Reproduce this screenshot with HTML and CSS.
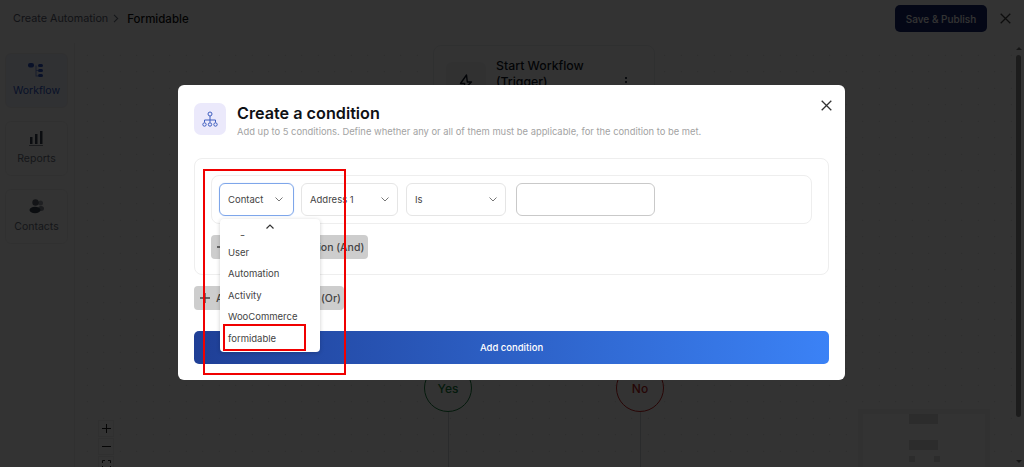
FILE: index.html
```html
<!DOCTYPE html>
<html lang="en">
<head>
    <link rel="stylesheet" href="styles.css">
</head>
<body>
    <div class="app">
        <header class="topbar">
            <div class="crumbs">
                <span class="crumb">Create Automation</span>
                <svg class="crumb-sep" width="6" height="9" viewBox="0 0 6 9"><path d="M1 .8l3.700 3.700L1 8.200" fill="none" stroke="currentColor" stroke-width="1.100"/></svg>
                <span class="crumb-current">Formidable</span>
            </div>
            <div class="topbar-actions">
                <button class="publish">Save &amp; Publish</button>
                <svg class="topbar-close" width="11" height="11" viewBox="0 0 11 11"><path d="M.7.7l9.600 9.600M10.300.7L.7 10.300" stroke="currentColor" stroke-width="1.300"/></svg>
            </div>
        </header>
        <div class="main">
            <aside class="sidebar">
                <div class="side-item active">
                    <svg width="17" height="17" viewBox="0 0 17 17" fill="currentColor"><rect x="0" y="1" width="6" height="4.500" rx="2"/><rect x="10" y="2" width="5" height="3" rx="1.500"/><rect x="10" y="7" width="5" height="3" rx="1.500"/><rect x="10" y="12" width="5" height="3" rx="1.500"/><path d="M7.500 3.500h1v10H10v1H7.500zM8.500 8H10v1H8.500z" opacity=".6"/></svg>
                    <span>Workflow</span>
                </div>
                <div class="side-item">
                    <svg width="17" height="17" viewBox="0 0 17 17" fill="currentColor"><rect x="2" y="7" width="2.500" height="7"/><rect x="7" y="4" width="2.500" height="10"/><rect x="12" y="1" width="2.500" height="13"/><rect x="1" y="15" width="14" height="1" opacity=".6"/></svg>
                    <span>Reports</span>
                </div>
                <div class="side-item">
                    <svg width="17" height="17" viewBox="0 0 17 17" fill="currentColor"><circle cx="7.500" cy="4.500" r="3.200" opacity=".8"/><circle cx="12.500" cy="5" r="2.500" opacity=".5"/><ellipse cx="7" cy="12" rx="5.500" ry="3.200"/><ellipse cx="13" cy="10.500" rx="3" ry="2.500" opacity=".6"/></svg>
                    <span>Contacts</span>
                </div>
            </aside>
            <section class="canvas">
                <div class="node">
                    <div class="node-icon">
                        <svg width="14" height="16" viewBox="0 0 14 16"><path d="M7.500 1L1.500 9.500h4.200L5 15l7.500-7H8.300z" fill="none" stroke="currentColor" stroke-width="1.400" stroke-linejoin="round"/></svg>
                    </div>
                    <div class="node-title">Start Workflow (Trigger)</div>
                    <div class="node-menu"><i></i><i></i><i></i></div>
                </div>
                <div class="branch branch-yes">Yes</div>
                <div class="branch branch-no">No</div>
                <div class="branch-line line-yes"></div>
                <div class="branch-line line-no"></div>
                <div class="zoom-tools">
                    <div class="zoom-btn"><svg width="9" height="9" viewBox="0 0 9 9"><path d="M4.500 0v9M0 4.500h9" stroke="currentColor"/></svg></div>
                    <div class="zoom-btn"><svg width="9" height="9" viewBox="0 0 9 9"><path d="M0 4.500h9" stroke="currentColor"/></svg></div>
                    <div class="zoom-btn"><svg width="9" height="9" viewBox="0 0 9 9"><path d="M.5 3V.5H3M6 .5h2.500V3M8.500 6v2.500H6M3 8.500H.5V6" fill="none" stroke="currentColor"/></svg></div>
                </div>
                <div class="minimap">
                    <div class="mini-a"></div>
                    <div class="mini-b"></div>
                    <div class="mini-row"><i></i><i></i></div>
                </div>
                <div class="scrollbar">
                    <div class="scroll-arrow"></div>
                    <div class="scroll-thumb"></div>
                    <div class="scroll-arrow scroll-arrow-down"></div>
                </div>
            </section>
        </div>
    </div>

    <div class="overlay"></div>

    <div class="modal">
        <svg class="modal-close" width="11" height="11" viewBox="0 0 11 11"><path d="M.7.7l9.600 9.600M10.300.7L.7 10.300" stroke="currentColor" stroke-width="1.300"/></svg>
        <div class="modal-head">
            <div class="modal-icon">
                <svg width="16" height="17" viewBox="0 0 16 17" fill="none" stroke="currentColor" stroke-width="1"><circle cx="8" cy="3" r="2"/><path d="M8 5v4M2.500 11.500V9h11v2.500M8 9v2.500"/><circle cx="2.500" cy="13.500" r="1.700"/><circle cx="8" cy="13.500" r="1.700"/><circle cx="13.500" cy="13.500" r="1.700"/></svg>
            </div>
            <div>
                <h2>Create a condition</h2>
                <p>Add up to 5 conditions. Define whether any or all of them must be applicable, for the condition to be met.</p>
            </div>
        </div>

        <div class="group">
            <div class="rule">
                <div class="select select-focus select-contact">Contact<svg width="8" height="5" viewBox="0 0 8 5"><path d="M.5.5L4 4 7.500.5" fill="none" stroke="currentColor"/></svg></div>
                <div class="select select-field">Address 1<svg width="8" height="5" viewBox="0 0 8 5"><path d="M.5.5L4 4 7.500.5" fill="none" stroke="currentColor"/></svg></div>
                <div class="select select-op">Is<svg width="8" height="5" viewBox="0 0 8 5"><path d="M.5.5L4 4 7.500.5" fill="none" stroke="currentColor"/></svg></div>
                <div class="value-input"></div>
            </div>
            <button class="add-btn add-and"><svg class="plus" width="10" height="10" viewBox="0 0 10 10"><path d="M5 0v10M0 5h10" stroke="currentColor" stroke-width="1.300"/></svg>Add a new condition (And)</button>
        </div>

        <button class="add-btn add-or"><svg class="plus" width="10" height="10" viewBox="0 0 10 10"><path d="M5 0v10M0 5h10" stroke="currentColor" stroke-width="1.300"/></svg>Add condition group (Or)</button>

        <button class="submit">Add condition</button>

        <div class="dropdown">
            <svg class="dropdown-up" width="8" height="5" viewBox="0 0 8 5"><path d="M.5 4.500L4 1l3.500 3.500" fill="none" stroke="currentColor" stroke-width="1.200"/></svg>
            <div class="dropdown-list">
                <div class="dropdown-item dropdown-cut">Segment</div>
                <div class="dropdown-item">User</div>
                <div class="dropdown-item">Automation</div>
                <div class="dropdown-item">Activity</div>
                <div class="dropdown-item">WooCommerce</div>
                <div class="dropdown-item">formidable</div>
            </div>
        </div>
    </div>

    <div class="mark mark-outer"></div>
    <div class="mark mark-inner"></div>
</body>
</html>
```

FILE: styles.css
```css
* {
    box-sizing: border-box;
}

body {
    margin: 0;
    width: 1024px;
    height: 467px;
    overflow: hidden;
    position: relative;
    font-family: Inter, "Liberation Sans", sans-serif;
    color: #111827;
    background: #fff;
}

.app {
    height: 467px;
    display: flex;
    flex-direction: column;
}

.topbar {
    height: 43px;
    padding: 5px 13px 0 13px;
    display: flex;
    justify-content: space-between;
    align-items: flex-start;
}

.crumbs {
    display: flex;
    align-items: center;
    height: 27px;
    font-size: 10.800px;
}

.crumb {
    color: #5b6270;
}

.crumb-sep {
    margin: 0 8px 0 5px;
    color: #6b7280;
}

.crumb-current {
    font-size: 11.500px;
    font-weight: 500;
    color: #111;
}

.topbar-actions {
    display: flex;
    align-items: center;
    gap: 13px;
}

.publish {
    width: 92px;
    height: 27px;
    border: 0;
    border-radius: 5px;
    background: #17266e;
    color: #fff;
    font: 500 10px Inter, sans-serif;
}

.topbar-close {
    color: #444;
}

.main {
    flex: 1;
    display: flex;
    min-height: 0;
}

.sidebar {
    width: 75px;
    padding: 10px 6px 0 5px;
    border-right: 1px solid #f0f0f0;
    display: flex;
    flex-direction: column;
    gap: 13px;
}

.side-item {
    height: 55px;
    padding-bottom: 2px;
    border: 1px solid #f1f1f1;
    border-radius: 6px;
    display: flex;
    flex-direction: column;
    align-items: center;
    justify-content: center;
    gap: 5px;
    font-size: 10.500px;
    color: #6b7280;
}

.side-item svg {
    color: #374151;
}

.side-item.active {
    background: #eef2ff;
    color: #2f55c9;
}

.side-item.active svg {
    color: #2f55c9;
}

.canvas {
    flex: 1;
    position: relative;
    background-image: radial-gradient(#cfcfcf 0.7px, transparent 0.8px);
    background-size: 16.500px 16.500px;
    background-position: 4px 4px;
}

.node {
    position: absolute;
    left: 358px;
    top: 2px;
    width: 222px;
    height: 90px;
    padding: 12px;
    background: #fff;
    border: 1px solid #eceef1;
    border-radius: 8px;
    display: flex;
    gap: 10px;
}

.node-icon {
    width: 40px;
    height: 40px;
    margin-top: 4px;
    border-radius: 6px;
    background: #f3f4f6;
    display: flex;
    align-items: center;
    justify-content: center;
    flex-shrink: 0;
}

.node-title {
    width: 100px;
    font-size: 12.300px;
    font-weight: 500;
    line-height: 16px;
}

.node-menu {
    position: absolute;
    right: 27px;
    top: 31px;
    display: flex;
    flex-direction: column;
    gap: 2px;
}

.node-menu i {
    width: 2px;
    height: 2px;
    background: #374151;
}

.branch {
    position: absolute;
    top: 321px;
    width: 48px;
    height: 48px;
    border-radius: 50%;
    background: #fff;
    border: 1px solid;
    display: flex;
    align-items: center;
    justify-content: center;
    font-size: 12px;
    font-weight: 500;
}

.branch-yes {
    left: 349px;
    color: #15803d;
    border-color: #16803d;
}

.branch-no {
    left: 541px;
    color: #b91c1c;
    border-color: #c81e1e;
}

.branch-line {
    position: absolute;
    top: 369px;
    bottom: 0;
    width: 1px;
    background: #d1d5db;
}

.line-yes {
    left: 373px;
}

.line-no {
    left: 565px;
}

.zoom-tools {
    position: absolute;
    left: 23px;
    top: 377px;
    width: 16px;
    display: flex;
    flex-direction: column;
    gap: 1px;
}

.zoom-btn {
    height: 17px;
    flex-shrink: 0;
    border: 1px solid #f1f1f1;
    background: #fff;
    display: flex;
    align-items: center;
    justify-content: center;
    color: #222;
}

.minimap {
    position: absolute;
    left: 783px;
    top: 366px;
    width: 132px;
    height: 70px;
    padding: 0 0 0 46px;
    background: #fff;
    border: 5px solid #f5f5f5;
}

.mini-a,
.mini-b {
    width: 29px;
    height: 10px;
    background: #dadada;
}

.mini-b {
    margin-top: 16px;
}

.mini-row {
    width: 31px;
    margin-top: 6px;
    display: flex;
    justify-content: space-between;
}

.mini-row i {
    width: 6px;
    height: 6px;
    background: #dadada;
}

.scrollbar {
    position: absolute;
    right: 3px;
    top: 4px;
    bottom: 4px;
    width: 5px;
    display: flex;
    flex-direction: column;
    align-items: center;
    justify-content: space-between;
}

.scroll-thumb {
    width: 5px;
    height: 362px;
    margin-bottom: 38px;
    border-radius: 3px;
    background: #8c8c8c;
}

.scroll-arrow {
    width: 0;
    height: 0;
    border: 3px solid transparent;
    border-top: 0;
    border-bottom: 3px solid #707070;
}

.scroll-arrow-down {
    border-bottom: 0;
    border-top: 3px solid #707070;
}

.overlay {
    position: absolute;
    inset: 0;
    background: rgba(0, 0, 0, 0.8);
}

.modal {
    position: absolute;
    left: 178px;
    top: 85px;
    width: 667px;
    height: 295px;
    padding: 18px 16px 0;
    background: #fff;
    border-radius: 6px;
}

.modal-close {
    position: absolute;
    right: 13px;
    top: 15px;
    color: #333;
}

.modal-head {
    display: flex;
    gap: 11px;
    height: 55px;
}

.modal-icon {
    width: 32px;
    height: 32px;
    border-radius: 7px;
    background: #ebe9fb;
    color: #3f5fc0;
    display: flex;
    align-items: center;
    justify-content: center;
}

.modal-head h2 {
    margin: 1px 0 0;
    font-size: 16.200px;
    line-height: 19px;
    font-weight: 600;
    color: #0f1115;
}

.modal-head p {
    margin: 2px 0 0;
    font-size: 9.400px;
    line-height: 13px;
    color: #a3a3a3;
}

.group {
    height: 117px;
    padding: 16px 16px 0;
    border: 1px solid #eeeeee;
    border-radius: 8px;
}

.rule {
    height: 49px;
    padding: 7px;
    border: 1px solid #eeeeee;
    border-radius: 8px;
    display: flex;
    align-items: flex-start;
    gap: 7px;
}

.select {
    height: 33px;
    padding: 0 8px;
    border: 1px solid #e5e5e5;
    border-radius: 6px;
    display: flex;
    align-items: center;
    justify-content: space-between;
    font-size: 9.500px;
    color: #444;
}

.select svg {
    color: #777;
}

.select-focus {
    border-color: #7ea6ea;
    box-shadow: 0 0 1px #a9c5f5;
}

.select-contact {
    width: 75px;
    padding-right: 10px;
}

.select-field {
    width: 97px;
    margin-right: 1px;
}

.select-op {
    width: 100px;
}

.value-input {
    width: 139px;
    height: 33px;
    margin-left: 3px;
    border: 1px solid #c9c9c9;
    border-radius: 6px;
}

.add-btn {
    border: 0;
    border-radius: 4px;
    background: #cdcdcd;
    color: #444;
    font: 500 10.500px Inter, sans-serif;
    height: 24px;
    display: flex;
    align-items: center;
    gap: 6px;
    padding: 0 0 0 6px;
    white-space: nowrap;
}

.plus {
    flex-shrink: 0;
}

.add-and {
    width: 157px;
    margin-top: 11px;
    gap: 4px;
}

.add-or {
    width: 150px;
    margin-top: 11px;
}

.submit {
    display: block;
    width: 635px;
    height: 33px;
    margin-top: 21px;
    border: 0;
    border-radius: 5px;
    background: linear-gradient(90deg, #1f3f96, #3b82f6);
    color: #fff;
    font: 500 9.500px Inter, sans-serif;
}

.dropdown {
    position: absolute;
    left: 42px;
    top: 134px;
    width: 100px;
    height: 133px;
    padding-top: 5px;
    background: #fff;
    border-radius: 4px;
    box-shadow: 0 1px 4px rgba(0, 0, 0, 0.2);
}

.dropdown-up {
    display: block;
    margin-left: 46px;
    color: #333;
}

.dropdown-list {
    height: 117px;
    margin-top: 6px;
    overflow: hidden;
}

.dropdown-item {
    height: 21.500px;
    padding-left: 8px;
    display: flex;
    align-items: center;
    font-size: 9.500px;
    color: #444;
}

.dropdown-cut {
    margin-top: -15.250px;
}

.mark {
    position: absolute;
    border: 2px solid #f00000;
}

.mark-outer {
    left: 203px;
    top: 169px;
    width: 143px;
    height: 206px;
}

.mark-inner {
    left: 223px;
    top: 324px;
    width: 83px;
    height: 27px;
}
```
